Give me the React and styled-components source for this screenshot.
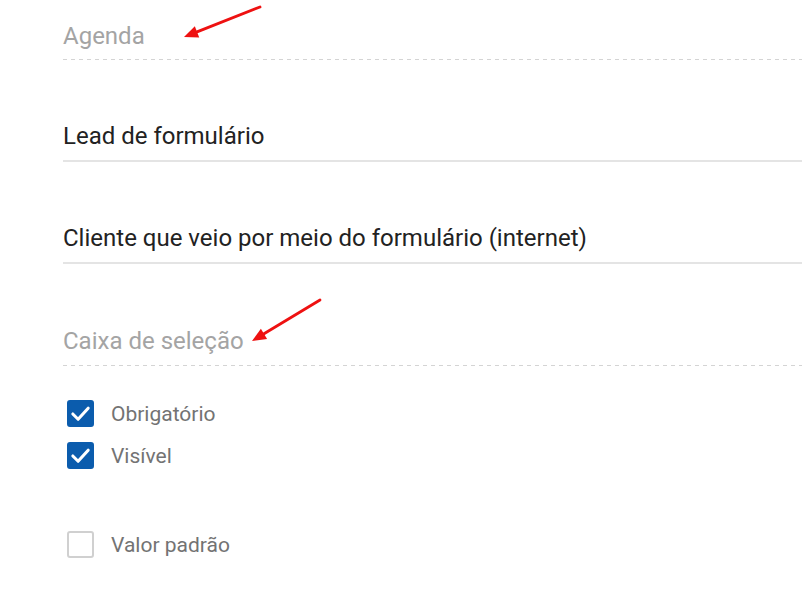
import React from 'react'
import styled, { createGlobalStyle } from 'styled-components'

const GlobalStyle = createGlobalStyle`
  html, body {
    margin: 0;
    padding: 0;
    background: #fff;
  }
  body {
    font-family: Roboto, "Noto Sans", Arial, sans-serif;
  }
`

const Page = styled.div`
  position: relative;
  width: 802px;
  height: 598px;
  overflow: hidden;
  padding: 22px 0 0 63px;
  box-sizing: border-box;
`

// a text field, either a solid underline (filled) or dashed (placeholder)
const Field = styled.div`
  padding-top: ${p => p.top}px;
  padding-bottom: ${p => p.bottom || 10}px;
  font-size: 24px;
  line-height: 28px;
  color: ${p => (p.placeholder ? '#a4a4a4' : '#222')};
  border-bottom: 2px solid #e4e4e4;
  ${p =>
    p.dashed &&
    `
    border-bottom: none;
    background-image: repeating-linear-gradient(to right, #d4d4d4 0 4px, transparent 4px 8px);
    background-size: 100% 1px;
    background-repeat: no-repeat;
    background-position: left bottom;
  `}
`

const Options = styled.div`
  display: flex;
  flex-direction: column;
  padding: 34px 0 0 4px;
`

const Option = styled.label`
  display: flex;
  align-items: center;
  gap: 17px;
  height: 27px;
  margin-bottom: ${p => p.gap || 15}px;
  font-size: 21px;
  color: #737373;
`

const Box = styled.span`
  width: 27px;
  height: 27px;
  box-sizing: border-box;
  border-radius: 3px;
  display: flex;
  align-items: center;
  justify-content: center;
  background: ${p => (p.checked ? '#0b5cad' : '#fff')};
  border: 2px solid ${p => (p.checked ? '#0b5cad' : '#d0d0d0')};
`

const Overlay = styled.svg`
  position: absolute;
  left: 0;
  top: 0;
  pointer-events: none;
`

const Check = () => (
  <svg width="23" height="23" viewBox="0 0 24 24">
    <path d="M4 12.5 L9.5 18 L20 6.5" fill="none" stroke="#fff" strokeWidth="3.2" strokeLinecap="round" strokeLinejoin="round" />
  </svg>
)

const Arrow = ({ x1, y1, x2, y2 }) => {
  const a = Math.atan2(y2 - y1, x2 - x1)
  const len = 14
  const w = 6
  const bx = x2 - Math.cos(a) * len
  const by = y2 - Math.sin(a) * len
  const px = -Math.sin(a) * w
  const py = Math.cos(a) * w
  return (
    <g>
      <line x1={x1} y1={y1} x2={bx} y2={by} stroke="#ee1111" strokeWidth="2.8" strokeLinecap="round" />
      <polygon points={`${x2},${y2} ${bx + px},${by + py} ${bx - px},${by - py}`} fill="#ee1111" />
    </g>
  )
}

export default function App() {
  return (
    <>
      <GlobalStyle />
      <Page>
        <Field top={0} bottom={10} dashed placeholder>Agenda</Field>
        <Field top={62}>Lead de formulário</Field>
        <Field top={62}>Cliente que veio por meio do formulário (internet)</Field>
        <Field top={63} bottom={11} dashed placeholder>Caixa de seleção</Field>
        <Options>
          <Option>
            <Box checked><Check /></Box>
            Obrigatório
          </Option>
          <Option gap={62}>
            <Box checked><Check /></Box>
            Visível
          </Option>
          <Option>
            <Box />
            Valor padrão
          </Option>
        </Options>
        <Overlay width="802" height="598">
          <Arrow x1={260} y1={7} x2={184} y2={37} />
          <Arrow x1={320} y1={300} x2={252} y2={341} />
        </Overlay>
      </Page>
    </>
  )
}
